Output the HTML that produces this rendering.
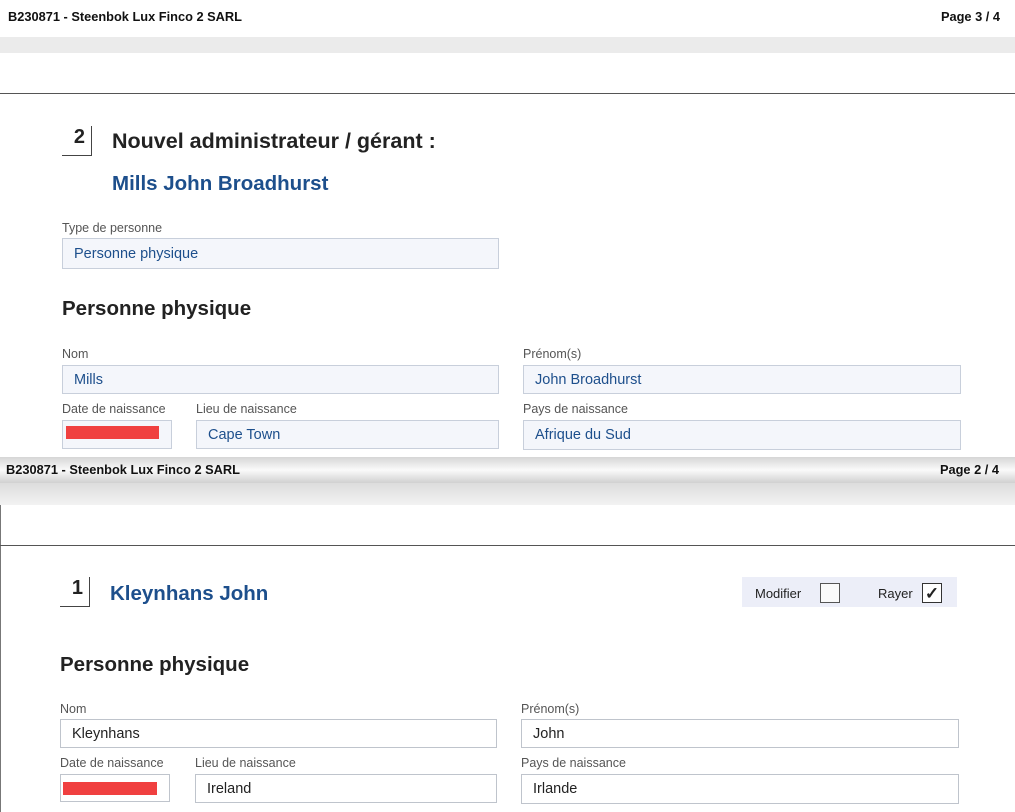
<!DOCTYPE html>
<html><head><meta charset="utf-8"><style>
*{margin:0;padding:0;box-sizing:border-box}
body{width:1015px;height:812px;position:relative;overflow:hidden;background:#fff;font-family:"Liberation Sans",sans-serif;color:#222}
.a{position:absolute}
.hdr{font-weight:bold;font-size:12.8px;color:#111}
.lbl{font-size:12.5px;color:#555}
.fld{position:absolute;height:29px;border:1px solid #c8cfdb;background:#f4f6fb;font-size:14.5px;color:#1d4f8c;padding:6px 0 0 11px}
.fld2{background:#fff;border-color:#bfc4cc;color:#222}
.num{position:absolute;font-weight:bold;font-size:20px;width:30px;height:30px;border-right:1px solid #444;border-bottom:1px solid #444;text-align:right;padding-right:6px}
.red{position:absolute;background:#f04040;height:13px}
</style></head><body>
<div class="a hdr" style="left:8px;top:9px">B230871 - Steenbok Lux Finco 2 SARL</div>
<div class="a hdr" style="right:15px;top:9px">Page 3 / 4</div>
<div class="a" style="left:0;top:37px;width:1015px;height:16px;background:#ebebeb"></div>
<div class="a" style="left:0;top:93px;width:1015px;height:1px;background:#555"></div>
<div class="num" style="left:62px;top:126px">2</div>
<div class="a" style="left:112px;top:129px;font-size:21.5px;font-weight:bold;color:#222">Nouvel administrateur / gérant :</div>
<div class="a" style="left:112px;top:172px;font-size:20.5px;font-weight:bold;color:#1d4f8c">Mills John Broadhurst</div>
<div class="a lbl" style="left:62px;top:221px">Type de personne</div>
<div class="fld" style="left:62px;top:238px;width:437px;height:31px;padding-top:7px">Personne physique</div>
<div class="a" style="left:62px;top:297px;font-size:20.5px;font-weight:bold">Personne physique</div>
<div class="a lbl" style="left:62px;top:347px">Nom</div>
<div class="fld" style="left:62px;top:365px;width:437px">Mills</div>
<div class="a lbl" style="left:523px;top:347px">Prénom(s)</div>
<div class="fld" style="left:523px;top:365px;width:438px">John Broadhurst</div>
<div class="a lbl" style="left:62px;top:402px">Date de naissance</div>
<div class="fld" style="left:62px;top:420px;width:110px"></div>
<div class="red" style="left:66px;top:426px;width:93px"></div>
<div class="a lbl" style="left:196px;top:402px">Lieu de naissance</div>
<div class="fld" style="left:196px;top:420px;width:303px">Cape Town</div>
<div class="a lbl" style="left:523px;top:402px">Pays de naissance</div>
<div class="fld" style="left:523px;top:420px;width:438px;height:30px">Afrique du Sud</div>

<div class="a" style="left:0;top:457px;width:1015px;height:26px;background:linear-gradient(#d6d6d6,#fafafa 50%,#d0d0d0)"></div>
<div class="a" style="left:0;top:483px;width:1015px;height:22px;background:linear-gradient(#dcdcdc,#f2f2f2)"></div>
<div class="a hdr" style="left:6px;top:462px">B230871 - Steenbok Lux Finco 2 SARL</div>
<div class="a hdr" style="right:16px;top:462px">Page 2 / 4</div>
<div class="a" style="left:0;top:505px;width:1px;height:307px;background:#777"></div>
<div class="a" style="left:0;top:545px;width:1015px;height:1px;background:#555"></div>
<div class="num" style="left:60px;top:577px">1</div>
<div class="a" style="left:110px;top:582px;font-size:20.5px;font-weight:bold;color:#1d4f8c">Kleynhans John</div>
<div class="a" style="left:742px;top:577px;width:215px;height:30px;background:#eceef8"></div>
<div class="a" style="left:755px;top:586px;font-size:13px">Modifier</div>
<div class="a" style="left:820px;top:583px;width:20px;height:20px;border:1px solid #555;background:#fafafa"></div>
<div class="a" style="left:878px;top:586px;font-size:13px">Rayer</div>
<div class="a" style="left:922px;top:583px;width:20px;height:20px;border:1px solid #333;background:#fff;font-size:17px;font-weight:bold;text-align:center;line-height:19px">✓</div>
<div class="a" style="left:60px;top:653px;font-size:20.5px;font-weight:bold">Personne physique</div>
<div class="a lbl" style="left:60px;top:702px">Nom</div>
<div class="fld fld2" style="left:60px;top:719px;width:437px">Kleynhans</div>
<div class="a lbl" style="left:521px;top:702px">Prénom(s)</div>
<div class="fld fld2" style="left:521px;top:719px;width:438px">John</div>
<div class="a lbl" style="left:60px;top:756px">Date de naissance</div>
<div class="fld fld2" style="left:60px;top:774px;width:110px;height:28px"></div>
<div class="red" style="left:63px;top:782px;width:94px"></div>
<div class="a lbl" style="left:195px;top:756px">Lieu de naissance</div>
<div class="fld fld2" style="left:195px;top:774px;width:302px;height:29px">Ireland</div>
<div class="a lbl" style="left:521px;top:756px">Pays de naissance</div>
<div class="fld fld2" style="left:521px;top:774px;width:438px;height:30px">Irlande</div>
</body></html>
